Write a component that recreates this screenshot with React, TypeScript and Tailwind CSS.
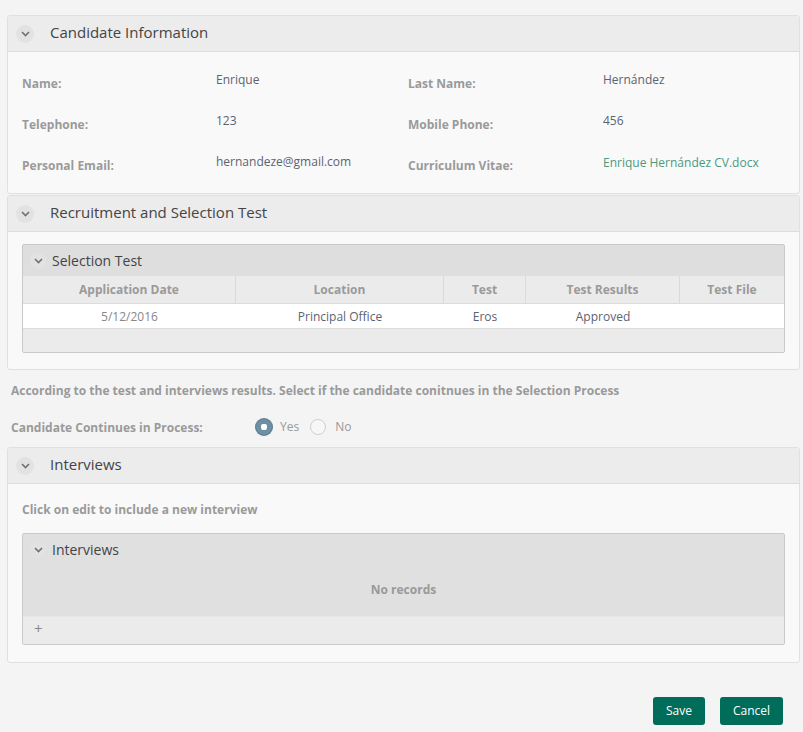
import React from "react";

function Chevron({ size = 18 }: { size?: number }) {
  return (
    <span
      className="flex items-center justify-center rounded-full bg-[#e2e2e2]"
      style={{ width: size, height: size }}
    >
      <svg width="9" height="6" viewBox="0 0 9 6" fill="none">
        <path d="M1 1l3.5 3.5L8 1" stroke="#707070" strokeWidth="1.6" />
      </svg>
    </span>
  );
}

function PanelHeader({ title }: { title: string }) {
  return (
    <div className="flex h-[36px] items-center border-b border-[#dcdcdc] bg-[#ececec] pl-[8px]">
      <Chevron />
      <span className="ml-[16px] pb-[2px] text-[15px] text-[#444]">{title}</span>
    </div>
  );
}

function GridTitle({ title }: { title: string }) {
  return (
    <div className="flex h-[31px] items-center pl-[7px]">
      <Chevron size={16} />
      <span className="ml-[6px] text-[14px] text-[#444]">{title}</span>
    </div>
  );
}

export default function App() {
  const info = [
    ["Name:", "Enrique", "Last Name:", "Hernández"],
    ["Telephone:", "123", "Mobile Phone:", "456"],
    ["Personal Email:", "hernandeze@gmail.com", "Curriculum Vitae:", "Enrique Hernández CV.docx"],
  ];

  const cols = [
    { name: "Application Date", value: "5/12/2016", w: "w-[213px]" },
    { name: "Location", value: "Principal Office", w: "w-[208px]" },
    { name: "Test", value: "Eros", w: "w-[82px]" },
    { name: "Test Results", value: "Approved", w: "w-[154px]" },
    { name: "Test File", value: "", w: "flex-1" },
  ];

  return (
    <div
      className="min-h-[732px] bg-[#f4f4f4] pt-[15px] pl-[7px] pr-[3px]"
      style={{ fontFamily: '"Open Sans", sans-serif' }}
    >
      {/* Candidate Information */}
      <div className="overflow-hidden rounded-[3px] border border-[#e0e0e0] bg-[#f9f9f9]">
        <PanelHeader title="Candidate Information" />
        <div className="px-[14px] pt-[9px] pb-[9px]">
          {info.map((row, i) => (
            <div key={i} className="grid h-[41px] grid-cols-[194px_192px_195px_1fr]">
              <div className="pt-[14px] text-[12px] font-bold text-[#9a9a9a]">{row[0]}</div>
              <div className="pt-[10px] text-[12px] text-[#5b6371]">{row[1]}</div>
              <div className="pt-[14px] text-[12px] font-bold text-[#9a9a9a]">{row[2]}</div>
              <div
                className={
                  i === 2
                    ? "pt-[11px] text-[12px] text-[#4b9a7e]"
                    : "pt-[10px] text-[12px] text-[#5b6371]"
                }
              >
                {row[3]}
              </div>
            </div>
          ))}
        </div>
      </div>

      {/* Recruitment and Selection Test */}
      <div className="mt-[1px] overflow-hidden rounded-[3px] border border-[#e0e0e0] bg-[#f9f9f9]">
        <PanelHeader title="Recruitment and Selection Test" />
        <div className="px-[14px] pt-[12px] pb-[16px]">
          <div className="overflow-hidden rounded-[2px] border border-[#c9c9c5] bg-[#dedede]">
            <GridTitle title="Selection Test" />
            <div className="flex h-[27px] bg-[#ebebeb] text-[12px] font-bold text-[#9a9a9a]">
              {cols.map((c, i) => (
                <div
                  key={c.name}
                  className={`${c.w} flex items-center justify-center ${i < cols.length - 1 ? "border-r border-[#dadada]" : ""}`}
                >
                  {c.name}
                </div>
              ))}
            </div>
            <div className="flex h-[26px] border-y border-[#dcdcdc] bg-white pt-[1px] text-[12px] text-[#5b6371]">
              {cols.map((c, i) => (
                <div
                  key={c.name}
                  className={`${c.w} flex items-center justify-center ${i === 0 ? "text-[#888]" : ""}`}
                >
                  {c.value}
                </div>
              ))}
            </div>
            <div className="h-[23px] bg-[#ebebeb]" />
          </div>
        </div>
      </div>

      {/* Continues in process */}
      <div className="pl-[4px]">
        <div className="pt-[12px] text-[12px] font-bold text-[#9a9a9a]">
          According to the test and interviews results. Select if the candidate conitnues in the Selection Process
        </div>
        <div className="mt-[17px] flex h-[20px] items-center">
          <span className="w-[245px] pt-[2px] text-[12px] font-bold text-[#9a9a9a]">
            Candidate Continues in Process:
          </span>
          <span className="flex h-[16px] w-[16px] items-center justify-center rounded-full bg-[#6e8ea1] shadow-[0_0_0_1px_#5a7a8e]">
            <span className="h-[6px] w-[6px] rounded-[2px] bg-white" />
          </span>
          <span className="ml-[8px] text-[12px] text-[#999]">Yes</span>
          <span className="ml-[11px] h-[16px] w-[16px] rounded-full border border-[#cfcfcf] bg-[#f7f7f7]" />
          <span className="ml-[9px] text-[12px] text-[#999]">No</span>
        </div>
      </div>

      {/* Interviews */}
      <div className="mt-[10px] overflow-hidden rounded-[3px] border border-[#e0e0e0] bg-[#f9f9f9]">
        <PanelHeader title="Interviews" />
        <div className="px-[14px] pt-[17px] pb-[17px]">
          <div className="text-[12px] font-bold text-[#9a9a9a]">Click on edit to include a new interview</div>
          <div className="mt-[14px] overflow-hidden rounded-[2px] border border-[#c9c9c5] bg-[#e0e0e0]">
            <GridTitle title="Interviews" />
            <div className="flex h-[51px] items-center justify-center pb-[2px] text-[12px] font-bold text-[#999]">
              No records
            </div>
            <div className="flex h-[28px] items-center border-t border-[#e6e6e6] bg-[#ebebeb] pb-[4px] pl-[11px] text-[15px] text-[#888]">
              +
            </div>
          </div>
        </div>
      </div>

      {/* Buttons */}
      <div className="flex justify-end gap-[15px] pt-[34px] pr-[17px]">
        <button className="h-[28px] w-[52px] rounded-[3px] bg-[#006d5b] text-[12px] text-white">Save</button>
        <button className="h-[28px] w-[63px] rounded-[3px] bg-[#006d5b] text-[12px] text-white">Cancel</button>
      </div>
    </div>
  );
}
